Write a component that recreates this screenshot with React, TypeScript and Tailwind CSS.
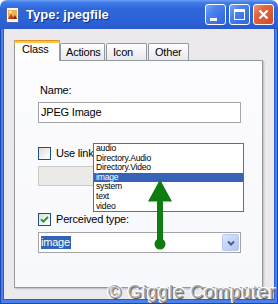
import React from "react";

function CheckBox({ checked }: { checked?: boolean }) {
  return (
    <div className="w-[13px] h-[13px] border border-[#1C5180] bg-[linear-gradient(135deg,#DCDCD7_0%,#F3F3F0_60%,#FFFFFF_100%)] flex items-center justify-center">
      {checked && (
        <svg width="9" height="9" viewBox="0 0 9 9">
          <path d="M1 4.2 L3.4 6.6 L8 2" fill="none" stroke="#21A121" strokeWidth="2" />
        </svg>
      )}
    </div>
  );
}

function TitleButton({ children, close }: { children: React.ReactNode; close?: boolean }) {
  return (
    <div
      className={
        "w-[21px] h-[21px] rounded-[3px] border border-white flex items-center justify-center " +
        (close
          ? "bg-[linear-gradient(135deg,#F0957A_0%,#E2653F_35%,#D34A24_100%)]"
          : "bg-[linear-gradient(135deg,#7AA6F6_0%,#4A82EE_35%,#2E66DE_100%)]")
      }
    >
      {children}
    </div>
  );
}

export default function App() {
  const items = ["audio", "Directory.Audio", "Directory.Video", "image", "system", "text", "video"];
  return (
    <div className="relative w-[278px] h-[304px] bg-white overflow-hidden font-['Liberation_Sans',_Arial,_sans-serif]">
      <div className="flex flex-col h-full rounded-t-[7px] overflow-hidden">
        {/* Title bar */}
        <div className="h-[29px] flex items-center pl-[6px] pr-[4px] bg-[linear-gradient(to_bottom,#6A9CF2_0%,#3E7BE8_10%,#2F67DA_30%,#2C62D6_75%,#2859CC_100%)]">
          <svg width="14" height="16" viewBox="0 0 14 16" className="shrink-0">
            <rect x="0.5" y="0.5" width="12" height="15" fill="#F4F6FB" stroke="#4A68B8" />
            <rect x="2" y="3" width="9" height="9" fill="#F0B050" />
            <path d="M2 12 L5 7 L8 12 Z" fill="#C8381C" />
            <path d="M6 12 L9 8 L11 12 Z" fill="#8A3010" />
            <rect x="3" y="4" width="3" height="2" fill="#FFE8A0" />
          </svg>
          <div className="ml-[6px] text-white font-bold text-[13px] leading-[16px] [text-shadow:1px_1px_0_#0A2A88]">
            Type: jpegfile
          </div>
          <div className="ml-auto flex gap-[3px]">
            <TitleButton>
              <div className="w-[7px] h-[3px] bg-white mt-[9px] mr-[5px]" />
            </TitleButton>
            <TitleButton>
              <div className="w-[11px] h-[11px] border border-white border-t-[3px]" />
            </TitleButton>
            <TitleButton close>
              <svg width="11" height="11" viewBox="0 0 11 11">
                <path d="M1.5 1.5 L9.5 9.5 M9.5 1.5 L1.5 9.5" stroke="white" strokeWidth="2.2" />
              </svg>
            </TitleButton>
          </div>
        </div>

        {/* Frame body */}
        <div className="flex-1 flex flex-col bg-[#4A80E8] border border-t-0 border-[#1C47B6] px-[2px] pb-[3px]">
          <div className="flex-1 flex flex-col bg-[#ECE9ED] border border-t-0 border-[#2B5DCF] pt-[11px] pl-[10px]">
            {/* Tabs */}
            <div className="flex items-end h-[20px] text-[11px] tracking-[-0.2px] text-black">
              <div className="relative z-10 -mb-px w-[46px] h-[21px] bg-white border-x border-[#919B9C] flex flex-col">
                <div className="-mx-px h-[3px] bg-[#FFC83C] border-t border-[#E68B2C] rounded-t-[3px]" />
                <div className="pl-[7px] leading-[13px]">Class</div>
              </div>
              <div className="w-[45px] h-[17px] border border-b-0 border-[#919B9C] rounded-t-[2px] bg-[linear-gradient(to_bottom,#FFFFFF,#E8E8EE)] pl-[5px] pt-[2px] leading-[13px]">
                Actions
              </div>
              <div className="ml-px w-[41px] h-[17px] border border-b-0 border-[#919B9C] rounded-t-[2px] bg-[linear-gradient(to_bottom,#FFFFFF,#E8E8EE)] pl-[6px] pt-[2px] leading-[13px]">
                Icon
              </div>
              <div className="ml-px w-[41px] h-[17px] border border-b-0 border-[#919B9C] rounded-t-[2px] bg-[linear-gradient(to_bottom,#FFFFFF,#E8E8EE)] pl-[6px] pt-[2px] leading-[13px]">
                Other
              </div>
            </div>

            {/* Panel */}
            <div className="w-[249px] h-[228px] border border-[#919B9C] bg-[linear-gradient(to_bottom,#FCFCFE,#F7F8FC)] shadow-[1px_1px_0_#C6C6CE,2px_2px_0_#DCDBE0] pl-[23px] flex flex-col text-[11px] tracking-[-0.2px] text-black">
              <div className="mt-[23px] h-[13px] leading-[13px] pl-[2px]">Name:</div>
              <div className="mt-[5px] w-[203px] h-[21px] border border-[#A5A5A8] bg-white flex items-center pl-[2px] leading-[13px]">
                JPEG Image
              </div>
              <div className="mt-[24px] h-[13px] flex items-center gap-[5px]">
                <CheckBox />
                <span className="leading-[13px]">Use link</span>
              </div>
              <div className="mt-[6px] w-[203px] h-[20px] border border-[#CBC9C4] bg-[#EBEAE8]" />
              <div className="mt-[27px] h-[13px] flex items-center gap-[5px]">
                <CheckBox checked />
                <span className="leading-[13px]">Perceived type:</span>
              </div>
              <div className="mt-[6px] w-[203px] h-[21px] border border-[#A5A5A8] bg-white flex items-center pl-[2px]">
                <span className="bg-[#3163B8] text-white leading-[13px] pr-px">image</span>
                <div className="ml-auto mr-px w-[17px] h-[17px] rounded-[2px] border border-[#B8C9F0] bg-[linear-gradient(135deg,#DCE6FB_0%,#C3D4F8_50%,#B2C6F0_100%)] flex items-center justify-center">
                  <svg width="8" height="6" viewBox="0 0 8 6">
                    <path d="M1 1.5 L4 4.5 L7 1.5" fill="none" stroke="#4D6185" strokeWidth="2" />
                  </svg>
                </div>
              </div>
            </div>
          </div>
        </div>
      </div>

      {/* Dropdown list overlay */}
      <div className="absolute left-[93px] top-[143px] w-[151px] h-[69px] border border-[#C4484A] bg-white text-[8.6px] leading-[9.6px] tracking-[-0.2px] text-black">
        {items.map((it) => (
          <div
            key={it}
            className={
              "h-[9.6px] pl-[2px] " + (it === "image" ? "bg-[#3563B5] text-white" : "")
            }
          >
            {it}
          </div>
        ))}
      </div>

      {/* Green arrow */}
      <svg className="absolute left-[140px] top-[172px]" width="40" height="80" viewBox="0 0 40 80">
        <path d="M20 7.5 L32 29.5 L8 29.5 Z" fill="#0E7D10" />
        <rect x="17" y="28" width="6" height="44" fill="#0E7D10" />
        <circle cx="20" cy="72" r="5.5" fill="#0E7D10" />
      </svg>

      {/* Watermark */}
      <div className="absolute left-[108px] top-[283px] text-[18px] leading-[18px] tracking-[0.8px] text-[#A8A8A8] whitespace-nowrap [text-shadow:-1px_-1px_0_#fff,1px_1px_0_#666,1px_-1px_0_#fff,-1px_1px_0_#fff]">
        © Giggle Computer
      </div>
    </div>
  );
}
